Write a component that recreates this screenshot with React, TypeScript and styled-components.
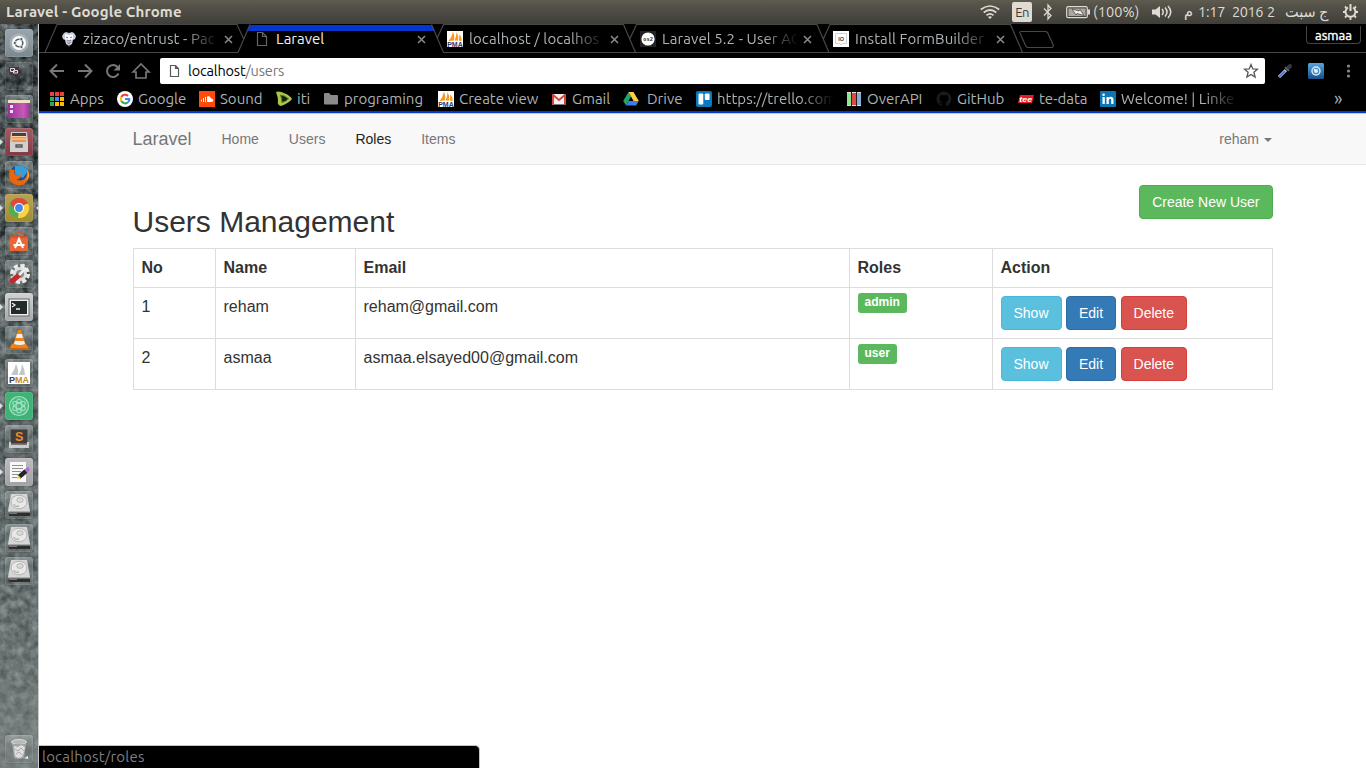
import React from 'react';
import styled, { createGlobalStyle } from 'styled-components';

const ui = '"Ubuntu", "Noto Sans", "DejaVu Sans", sans-serif';

const Global = createGlobalStyle`
  * { box-sizing: border-box; }
  body { margin: 0; background: #fff; overflow: hidden; font-family: "Liberation Sans", Arial, sans-serif; }
  svg { display: block; flex: none; }
`;

const Desktop = styled.div`
  display: flex; flex-direction: column; width: 1366px; height: 768px; position: relative;
`;
const Panel = styled.header`
  height: 24px; flex: none; display: flex; justify-content: space-between; align-items: center;
  padding: 0 7px 0 6px; background: linear-gradient(#5f5b4f 0, #55534a 20%, #3f3e39 100%);
  color: #dfdbd2; font: 14.5px ${ui};
`;
const WindowTitle = styled.div`font-weight: 700; font-size: 15px; letter-spacing: 0.13px; line-height: 24px; white-space: nowrap;`;
const Indicators = styled.div`display: flex; align-items: center; height: 24px;`;
const Slot = styled.div<{ $w: number; $ls?: number }>`
  width: ${p => p.$w}px; flex: none; white-space: nowrap; letter-spacing: ${p => p.$ls ?? 0}px; line-height: 24px;
`;
const Language = styled.div`
  width: 20px; height: 20px; margin-right: 11px; background: #dfdbd2; color: #3c3b37; border-radius: 2px;
  font-size: 13px; line-height: 20px; text-align: center; letter-spacing: -0.5px;
`;
const Body = styled.div`display: flex; flex: 1; min-height: 0;`;
const Launcher = styled.aside`
  width: 39px; flex: none; position: relative; display: flex; flex-direction: column; justify-content: space-between;
  padding: 5px 0 5px 5px; background: #59625f; border-right: 1px solid #c9cccb; overflow: hidden;
`;
const Stone = styled.svg`position: absolute; inset: 0;`;
const TileList = styled.div`display: flex; flex-direction: column; gap: 5px; position: relative;`;
const Tile = styled.div<{ $bg?: string }>`
  width: 28px; height: 28px; border-radius: 3px; position: relative;
  background: ${p => p.$bg ?? 'linear-gradient(rgba(190,200,200,.4), rgba(110,120,120,.25) 50%, rgba(110,120,120,.25))'};
  box-shadow: inset 0 0 0 1px rgba(255,255,255,.1), 0 0 2px rgba(0,0,0,.35);
`;
const Pip = styled.i<{ $right?: boolean }>`
  position: absolute; top: 11px; ${p => (p.$right ? 'right: -6px; border-right: 3px solid #ddd;' : 'left: -5px; border-left: 3px solid #ddd;')}
  border-top: 3px solid transparent; border-bottom: 3px solid transparent;
`;
const Browser = styled.main`flex: 1; min-width: 0; display: flex; flex-direction: column;`;
const TabStrip = styled.div`
  height: 30px; flex: none; background: #000; position: relative; display: flex; padding-left: 22px; font: 15px ${ui};
`;
const Outlines = styled.svg`position: absolute; left: 0; top: 0;`;
const Tab = styled.div<{ $active?: boolean }>`
  width: 193px; height: 30px; display: flex; align-items: center; position: relative; color: ${p => (p.$active ? '#f1f1f1' : '#adb2b6')};
`;
const Caption = styled.div<{ $fade?: boolean }>`
  width: 136px; margin-left: 6px; overflow: hidden; white-space: nowrap; line-height: 30px;
  ${p => p.$fade && 'letter-spacing: .08px; mask-image: linear-gradient(90deg, #000 102px, transparent 136px);'}
`;
const Profile = styled.div`
  position: absolute; right: 5px; top: 2px; width: 55px; height: 18px; border: 1px solid #444; border-top: 0; border-radius: 0 0 4px 4px;
  color: #fff; font-size: 13px; line-height: 19px; text-align: center; -webkit-text-stroke: .4px #fff;
`;
const Toolbar = styled.div`height: 34px; flex: none; background: #000; display: flex; padding: 4px 7px 4px 8px; align-items: center;`;
const NavIcons = styled.div`display: flex; width: 113px; gap: 8px;`;
const Omnibox = styled.div`
  width: 1105px; height: 26px; background: #fff; border-radius: 2px; display: flex; align-items: center; padding: 0 6px 0 7px;
  font: 14.5px ${ui}; color: #000;
`;
const Address = styled.div`flex: 1; padding-left: 7px; letter-spacing: -0.17px; line-height: 26px; span { color: #767676; }`;
const Extensions = styled.div`display: flex; flex: 1; align-items: center; padding-left: 12px; gap: 15px;`;
const Bookmarks = styled.div`
  height: 25px; flex: none; background: #000; border-bottom: 2px solid #0736cf; padding: 0 0 2px 11px; display: flex; color: #adb2b6;
  font: 15px ${ui};
`;
const Bookmark = styled.div<{ $w: number; $gap?: number; $fade?: boolean }>`
  width: ${p => p.$w}px; flex: none; display: flex; align-items: center; gap: ${p => p.$gap ?? 5}px; white-space: nowrap;
  line-height: 21px;
  span { overflow: hidden; ${p => p.$fade && 'width: 117px; mask-image: linear-gradient(90deg, #000 84px, transparent 117px);'} }
`;
const More = styled.div`font-size: 18px; margin-left: 98px; line-height: 20px;`;

const Page = styled.div`flex: 1; background: #fff; color: #333; font-size: 16px; line-height: 1.42857;`;
const Navbar = styled.nav`height: 52px; background: #f8f8f8; border-bottom: 1px solid #e7e7e7; border-top: 1px solid #c5c9d8;`;
const Container = styled.div`width: 1140px; margin: 0 auto; display: flex; flex-direction: column;`;
const NavRow = styled(Container)`flex-direction: row; height: 50px; align-items: center; font-size: 14px; color: #777;`;
const Brand = styled.a`font-size: 18px; width: 74px; line-height: 20px;`;
const NavLink = styled.a<{ $active?: boolean }>`padding: 0 15px; line-height: 20px; ${p => p.$active && 'color: #222;'}`;
const UserMenu = styled.a`
  margin-left: auto; display: flex; align-items: center; gap: 5px; line-height: 20px; padding-right: .5px;
  &::after { content: ''; margin-top: 1px; border-top: 4px solid #777; border-left: 4px solid transparent; border-right: 4px solid transparent; }
`;
const Heading = styled.div`display: flex; justify-content: space-between; align-items: flex-start; padding-top: 20px; height: 83px;`;
const Title = styled.h2`font-size: 30px; line-height: 33px; margin: 20px 0 10px; font-weight: 400;`;
const tones = {
  success: ['#5cb85c', '#4cae4c'], info: ['#5bc0de', '#46b8da'], primary: ['#337ab7', '#2e6da4'], danger: ['#d9534f', '#d43f3a'],
};
const Button = styled.button<{ $tone: keyof typeof tones }>`
  height: 34px; padding: 6px 12px; font: 14px/20px "Liberation Sans", Arial, sans-serif; color: #fff; border-radius: 4px;
  background: ${p => tones[p.$tone][0]}; border: 1px solid ${p => tones[p.$tone][1]};
`;
const Table = styled.table`
  width: 1140px; border-collapse: collapse; table-layout: fixed;
  th, td { border: 1px solid #ddd; padding: 8px; text-align: left; vertical-align: top; }
  th { height: 39px; padding-bottom: 7px; } td { height: 51px; }
`;
const Actions = styled.div`display: flex; gap: 4.44px; height: 34px;`;
const Badge = styled.span`
  display: block; width: max-content; height: 20px; margin-top: -3px; padding: 3px 7px 5px; border-radius: 3px; background: #5cb85c; color: #fff; font: bold 12px/12px "Liberation Sans", Arial, sans-serif;
`;
const StatusBubble = styled.div`
  position: absolute; left: 39px; bottom: 0; width: 441px; height: 23px; background: #000; color: #7f7f7f; border: 1px solid #c4c4c4;
  border-left: 0; border-bottom: 0; border-radius: 0 5px 0 0; padding-left: 3px; font: 15px/22px ${ui}; letter-spacing: .2px;
`;

const Doc = ({ c = '#5a5a5a' }) => (
  <svg width="16" height="16" viewBox="0 0 16 16" fill="none" stroke={c} strokeWidth="1.2"><path d="M3.5 1.5h5l4 4v9h-9zM8.5 1.5v4h4" /></svg>
);
const Close = () => <svg width="9" height="9" viewBox="0 0 9 9" stroke="#8a8a8a" strokeWidth="1.5"><path d="M1 1l7 7M8 1L1 8" /></svg>;
const Pma = () => (
  <svg width="16" height="16" viewBox="0 0 16 16"><path fill="#fff" d="M0 0h16v16H0z" />
    <path fill="#f7981d" d="M1.500 10Q5 6 6 .5Q8 5 7.200 9.500zM7.700 9.500Q9.500 5 9.500 1Q12 5 11.300 9.500zM12 9.500l.3-6Q15 6 14.500 10z" />
    <text x=".2" y="16" fontFamily="Liberation Sans" fontWeight="bold" fontSize="7" textLength="15.600" lengthAdjust="spacingAndGlyphs" fill="#36386b">PMA</text></svg>
);
const Lion = () => (
  <svg width="16" height="16" viewBox="0 0 16 16"><path fill="#c7cbdc" d="M3 2l2-1 3 1 3-1 2 1 2 3-1 3-2 1-1 4-3 2-3-2-1-4-2-1-1-3z" /><path fill="#fff" d="M4 3l4 1 4-1v5l-4 2-4-2z" /><path stroke="#565c78" strokeWidth=".8" fill="none" d="M5 6l2 .8M11 6l-2 .8M6 9l2 1 2-1M6.500 11.500l1.500 1 1.500-1" /><path fill="#a4552c" d="M6.500 14h3L8 16z" /></svg>
);
const Os2 = () => (
  <svg width="16" height="16" viewBox="0 0 16 16"><path fill="#222" d="M0 0h16v16H0z" /><circle cx="8" cy="8" r="6.6" fill="#fff" /><text x="3.2" y="9.8" fontFamily="Liberation Sans" fontWeight="bold" fontSize="5" textLength="9.6" fill="#222">os2</text></svg>
);
const Io = () => (
  <svg width="16" height="16" viewBox="0 0 16 16"><path fill="#fff" d="M0 0h16v16H0z" /><path fill="none" stroke="#d0d0d0" d="M2.5 2.5h11v10h-4L8 14l-1.500-1.500h-4z" /><text x="5.300" y="9.500" fontFamily="Liberation Sans" fontWeight="bold" fontSize="5.500" fill="#444">IO</text></svg>
);
const GridApps = () => (
  <svg width="14" height="14" viewBox="0 0 14 14">
    {['#ea4335', '#ea4335', '#ea4335', '#34a853', '#4285f4', '#fbbc05', '#34a853', '#fbbc05', '#fbbc05'].map((c, i) => (
      <rect key={i} x={(i % 3) * 5} y={Math.floor(i / 3) * 5} width="4" height="4" fill={c} />
    ))}
  </svg>
);
const Google = () => (
  <svg width="16" height="16" viewBox="0 0 16 16"><circle cx="8" cy="8" r="8" fill="#fff" /><g fill="none" strokeWidth="2.100">
    <path stroke="#ea4335" d="M4.300 5.900A4.300 4.300 0 0 1 11 4.900" /><path stroke="#fbbc05" d="M4.300 5.900a4.300 4.300 0 0 0 0 4.200" /><path stroke="#34a853" d="M4.300 10.100A4.300 4.300 0 0 0 11 11.200" /><path stroke="#4285f4" d="M11 11.200Q12.500 10 12.300 8H8" /></g></svg>
);
const SoundCloud = () => (
  <svg width="16" height="16" viewBox="0 0 16 16"><path fill="#ff4a0c" d="M0 0h16v16H0z" /><path stroke="#fff" d="M2.500 8.500v2M4.500 7v4M6.500 6v5" /><path fill="#fff" d="M8 5.500Q11 4.200 12 7.500q2.200 0 2.200 1.800T12.400 11H8z" /></svg>
);
const Iti = () => (
  <svg width="16" height="16" viewBox="0 0 16 16"><path d="M0 1Q3-.5 9 2.500Q14 4.500 16 8Q13 12 5 15Q1 14 2 10Q2 6 0 1z" fill="#a9c64b" /><path d="M4.500 4Q9 4.500 12.500 7.800Q10 10.500 6 11.500Q6 8 4.500 4z" fill="#152109" stroke="#587d23" /></svg>
);
const Folder = () => <svg width="16" height="16" viewBox="0 0 16 16"><path fill="#8b8b8b" d="M1 3q0-1 1-1h4l2 2h6q1 0 1 1v7.500q0 1-1 1H2q-1 0-1-1z" /></svg>;
const Gmail = () => (
  <svg width="16" height="16" viewBox="0 0 16 16"><path fill="#f1f1f1" d="M1 3h14v10.500H1z" /><path fill="#d44638" d="M1 3h2v10.500H1zM13 3h2v10.500h-2z" /><path fill="none" stroke="#d44638" strokeWidth="1.800" d="M1.500 3.500L8 9l6.500-5.500" /></svg>
);
const Drive = () => (
  <svg width="16" height="16" viewBox="0 0 16 16"><path fill="#23a566" d="M5.500 1L8 5.500 3 14.500.2 10z" /><path fill="#ffcf43" d="M5.500 1h5l5.300 9h-5.200z" /><path fill="#3b7ded" d="M5.500 10h10.300L13 14.500H3z" /></svg>
);
const Trello = () => (
  <svg width="16" height="16" viewBox="0 0 16 16"><rect width="16" height="16" rx="2" fill="#0b79bf" /><rect x="2.500" y="2.500" width="4.800" height="11" rx="1" fill="#fff" /><rect x="8.800" y="2.500" width="4.800" height="6.500" rx="1" fill="#fff" /></svg>
);
const OverApi = () => (
  <svg width="16" height="16" viewBox="0 0 16 16"><path fill="#ddd" d="M1 1h14v14H1z" /><path fill="#8fe68f" d="M1 2h4v12H1z" /><path fill="#e84444" d="M6 2h4v12H6z" /><path fill="#88aed4" d="M11 2h4v12h-4z" /><path stroke="#222" d="M5.500 1v14M10.500 1v14" /></svg>
);
const Github = () => (
  <svg width="16" height="16" viewBox="0 0 16 16"><path fill="#191c1f" d="M8 .5a7.500 7.500 0 0 0-2.400 14.600v-2.400Q3.500 13 3 11.200h1.200l1.600 1 .6-1Q3.200 10.500 3.500 6.500l.8-1.200V3.400l2 .8h3.400l2-.8v1.900l.8 1.200q.3 4-2.900 4.700.7.500.7 1.600v2.300A7.500 7.500 0 0 0 8 .5z" /></svg>
);
const TeData = () => (
  <svg width="16" height="16" viewBox="0 0 16 16"><path fill="#e31d25" d="M2 4h14l-2 8H0z" /><text x="1.300" y="10.700" fontFamily="Liberation Sans" fontWeight="bold" fontStyle="italic" fontSize="8" textLength="12.800" lengthAdjust="spacingAndGlyphs" fill="#fff">tee</text></svg>
);
const LinkedIn = () => (
  <svg width="16" height="16" viewBox="0 0 16 16"><rect width="16" height="16" rx="1" fill="#0b76b6" /><path fill="#fff" d="M2.500 6h2.300v7H2.500zM6.500 6h2.200v1Q10 5.300 12 6.100q1.500.7 1.500 2.700V13h-2.300V9.200q0-1.400-1.100-1.400T8.800 9.200V13H6.500z" /><circle cx="3.600" cy="3.700" r="1.300" fill="#fff" /></svg>
);

const Art = ({ children }: { children: React.ReactNode }) => <svg width="28" height="28" viewBox="0 0 28 28">{children}</svg>;
const Disk = () => (
  <Art><path fill="#d6d7d5" d="M6 3h16l3 17H3z" /><path fill="#2c2d2d" d="M3 20h22v5H4z" /><path fill="#a9a9a7" d="M3 20h22v1.500H3z" /><path fill="#777" d="M4 21.500h8V23H4z" /><ellipse cx="14" cy="11" rx="8" ry="6.800" fill="#e8e8e6" stroke="#b4b4b4" /><ellipse cx="15" cy="9" rx="3.200" ry="2.300" fill="#dcdcda" stroke="#aaa" strokeWidth=".8" /><path stroke="#999" fill="none" d="M9 13q0 3 5 2" /></Art>
);
const Chrome = () => (
  <Art><circle cx="14" cy="14" r="10" fill="#4caf50" /><path fill="#e04a3c" d="M14 14L5.300 9A10 10 0 0 1 22.700 9z" /><path fill="#fdd23c" d="M14 14l8.700-5A10 10 0 0 1 13 24z" /><path fill="#e04a3c" d="M5.300 9h17.400v1H14L9.700 16z" /><circle cx="14" cy="14" r="5" fill="#fff" /><circle cx="14" cy="14" r="3.900" fill="#438bea" /></Art>
);

const tiles: { bg?: string; left?: boolean; right?: boolean; art: React.ReactNode }[] = [
  { bg: 'linear-gradient(#9aa6ad, #7b898d)', art: <Art><circle cx="14" cy="14" r="9.500" fill="#b5bdc0" opacity=".7" /><circle cx="14" cy="14" r="7" fill="#fff" /><circle cx="14" cy="14" r="3.800" fill="none" stroke="#565d60" strokeWidth="1.600" /><g fill="#565d60" stroke="#fff" strokeWidth=".7"><circle cx="9.800" cy="14" r="1.600" /><circle cx="16.400" cy="10" r="1.600" /><circle cx="16.400" cy="18" r="1.600" /></g></Art> },
  { bg: 'linear-gradient(rgba(140,145,145,.3), rgba(30,35,35,.35) 50%, transparent)', art: <Art><rect x="4" y="5" width="10" height="8" fill="#493544" /><path fill="none" stroke="#e2dfe0" d="M5.500 6.500h4v3h-4zM8.500 8.500h4v2.500h-4z" /></Art> },
  { art: <Art><defs><linearGradient id="desk"><stop stopColor="#9a2fa0" /><stop offset=".7" stopColor="#c959b5" /><stop offset="1" stopColor="#95389a" /></linearGradient></defs><rect x="3" y="5" width="22" height="18" fill="url(#desk)" /><path fill="#ece4c5" d="M3 5h22v3H3z" /><path fill="#f5dff2" d="M5 10h3v3H5zM5 15h3v3H5z" /></Art> },
  { bg: 'linear-gradient(#a45c62, #823842)', left: true, art: <Art><path fill="#ccc" d="M6 4h16l1 10H5z" /><path fill="#4b3f3b" d="M7 5h14v9H7z" /><path fill="#ee944e" d="M7 8h14v6H7z" /><path stroke="#ffd2a2" d="M7 8.500h14M7 11h14" /><path fill="#d0d0ce" d="M5 14h18v10H5z" /><path fill="none" stroke="#555" strokeWidth="1.300" d="M11 17v2h6v-2z" /></Art> },
  { art: <Art><circle cx="14" cy="14" r="10" fill="#1a4f9c" /><path fill="#35a0d8" d="M10 5q9-3 13 5l-5 7-8-4z" /><path fill="#e8670e" d="M5 8q2 1 5 1-2 3 1 5 3 1 5-1 0 6-5 5 6 4 10-2 2-4 1-8 4 5 1 11-4 6-10 5.500Q1 22 5 8z" /><path fill="#ffc730" d="M22 8q4 7-1 12 3-5 1-12z" /></Art> },
  { bg: 'linear-gradient(#b7a353, #a18b35)', left: true, right: true, art: <Chrome /> },
  { art: <Art><path fill="none" stroke="#bb603d" strokeWidth="2" d="M10 10V7q4-4 8 0v3" /><path fill="#ea6635" d="M5 9h18v15H5z" /><path fill="#c45b36" d="M5 9h18v2H5z" /><path fill="none" stroke="#fff" strokeWidth="2" d="M10 21l4-9 4 9M8.500 18h11" /></Art> },
  { art: <Art><circle cx="15" cy="14" r="7.500" fill="none" stroke="#ececea" strokeWidth="5" strokeDasharray="3.700 2.190" /><circle cx="15" cy="14" r="7" fill="#ddd" /><circle cx="15" cy="14" r="4" fill="#85908e" /><path stroke="#c3292a" strokeWidth="5" strokeLinecap="round" d="M7 21l6-5" /><path stroke="#eee" strokeWidth="2.500" d="M14 15l7-7" /><path fill="none" stroke="#eee" strokeWidth="2" d="M19 4q-3 5 4 5" /></Art> },
  { bg: 'linear-gradient(#d2d2d4, #a8a8aa)', left: true, art: <Art><rect x="4" y="6" width="20" height="17" fill="#eee" stroke="#60686b" /><rect x="6" y="8" width="16" height="13" fill="#24292a" /><path fill="none" stroke="#eee" strokeWidth="1.300" d="M7 10l3 2-3 2M11 16h4" /></Art> },
  { art: <Art><path fill="#ed831d" d="M7 18h14l3 5H4z" /><path fill="#ed831d" d="M13 4h3l5 15q-7 3-13 0z" /><path fill="#eee" d="M12 8h5l1 4h-7zM10 15h9l1 3q-5 2-11 0z" /><path fill="#c7660f" d="M4 22h20v2H4z" /></Art> },
  { art: <Art><path fill="#fff" d="M3 3h22v22H3z" /><path fill="#c4c5c8" d="M6 16Q10 10 11 5q3 6 2 11zM14 16q3-6 3-11 3 5 3 11z" /><text x="4" y="24" fontFamily="Liberation Sans" fontWeight="bold" fontSize="9" textLength="20" lengthAdjust="spacingAndGlyphs" fill="#333d63">P<tspan fill="#c78930">MA</tspan></text></Art> },
  { bg: '#3fb276', left: true, art: <Art><circle cx="14" cy="14" r="9.500" fill="#48bd83" stroke="#a7e1c2" strokeWidth="1.200" /><g fill="none" stroke="#a7e1c2" strokeWidth="1.100"><ellipse cx="14" cy="14" rx="7" ry="2.800" transform="rotate(30 14 14)" /><ellipse cx="14" cy="14" rx="7" ry="2.800" transform="rotate(90 14 14)" /><ellipse cx="14" cy="14" rx="7" ry="2.800" transform="rotate(150 14 14)" /></g></Art> },
  { art: <Art><path fill="#3d3d3e" stroke="#888" d="M5 4h18v15H5z" /><path fill="#ccc" d="M4 17h2v3h16v-3h2v6H4z" /><text x="10" y="15.500" fontFamily="Liberation Sans" fontWeight="bold" fontSize="12.500" fill="#f38b29">S</text></Art> },
  { bg: 'linear-gradient(#bdbdbf, #a2a2a4)', left: true, art: <Art><path fill="#f8f8f8" d="M5 4h16v20H5z" /><path stroke="#909090" d="M7 7.500h11M7 10.500h11M7 13.500h9M7 16.500h6M7 19.500h5" /><path stroke="#252525" strokeWidth="4.500" d="M14 19l7-6" /><path fill="#b46bd0" d="M20 11l3-2 2 3-3 3z" /><path fill="#f3cf44" d="M12 21l1-4 3 3z" /></Art> },
  { art: <Disk /> }, { art: <Disk /> }, { art: <Disk /> },
];

const tabs = [
  { icon: <Lion />, title: 'zizaco/entrust - Pac' },
  { icon: <Doc c="#666" />, title: 'Laravel', active: true },
  { icon: <Pma />, title: 'localhost / localhos' },
  { icon: <Os2 />, title: 'Laravel 5.2 - User AC' },
  { icon: <Io />, title: 'Install FormBuilder' },
];
const bookmarks = [
  { icon: <GridApps />, text: 'Apps', w: 67, gap: 6 },
  { icon: <Google />, text: 'Google', w: 82 },
  { icon: <SoundCloud />, text: 'Sound', w: 77 },
  { icon: <Iti />, text: 'iti', w: 47 },
  { icon: <Folder />, text: 'programing', w: 115 },
  { icon: <Pma />, text: 'Create view', w: 113 },
  { icon: <Gmail />, text: 'Gmail', w: 72 },
  { icon: <Drive />, text: 'Drive', w: 73, gap: 8 },
  { icon: <Trello />, text: 'https://trello.com', w: 150, fade: true },
  { icon: <OverApi />, text: 'OverAPI', w: 90 },
  { icon: <Github />, text: 'GitHub', w: 82 },
  { icon: <TeData />, text: 'te-data', w: 82 },
  { icon: <LinkedIn />, text: 'Welcome! | Linke', w: 136, fade: true },
];
const users = [
  { no: 1, name: 'reham', email: 'reham@gmail.com', role: 'admin' },
  { no: 2, name: 'asmaa', email: 'asmaa.elsayed00@gmail.com', role: 'user' },
];

const SystemPanel = () => (
  <Panel>
    <WindowTitle>Laravel - Google Chrome</WindowTitle>
    <Indicators>
      <Slot $w={32}><svg width="20" height="24" viewBox="0 0 20 24" fill="none" stroke="#dfdbd2" strokeWidth="1.700"><path d="M.8 9.500Q10 2.500 19.200 9.500M3.700 12.500Q10 7.500 16.300 12.500M6.500 15.300Q10 12.500 13.500 15.300" /><path fill="#dfdbd2" stroke="none" d="M8 17q2-1.500 4 0l-2 2z" /></svg></Slot>
      <Language>En</Language>
      <Slot $w={23}><svg width="10" height="24" viewBox="0 0 10 24" fill="none" stroke="#dfdbd2" strokeWidth="1.300"><path d="M1 8.500l7 7L5 19V5l3 3.500-7 7" /></svg></Slot>
      <Slot $w={27}><svg width="25" height="24" viewBox="0 0 25 24"><rect x=".7" y="6.700" width="20.600" height="11" rx="1.500" fill="none" stroke="#dfdbd2" strokeWidth="1.200" /><path fill="#aaa79f" d="M2.500 8.500h17v7.500h-17z" /><path fill="#dfdbd2" d="M22 9.500h2v5h-2z" /><path fill="#eee" stroke="#3c3b37" strokeWidth=".7" d="M6 9l7 2 1-1.500 4 6-7-2-1 1.500z" /></svg></Slot>
      <Slot $w={59} $ls={0.1}>(100%)</Slot>
      <Slot $w={32}><svg width="21" height="24" viewBox="0 0 21 24" fill="none" stroke="#dfdbd2" strokeWidth="1.500"><path fill="#dfdbd2" stroke="none" d="M0 9.500h3.500L8 6v12l-4.500-3.500H0z" /><path d="M10 9q2.500 3 0 6M13 7.500q4 4.500 0 9M16 6q5.500 6 0 12" /></svg></Slot>
      <Slot $w={14}>م</Slot>
      <Slot $w={34} $ls={-0.2}>1:17</Slot>
      <Slot $w={35} $ls={-0.4}>2016</Slot>
      <Slot $w={18}>2</Slot>
      <Slot $w={57} dir="rtl" style={{ textAlign: 'left' }}>ج سبت</Slot>
      <svg width="17" height="24" viewBox="0 0 17 24" fill="none" stroke="#dfdbd2" strokeWidth="2"><path d="M6 7.500a5 5 0 1 0 5 0M8.500 4v7" /><path strokeWidth="1.800" d="M1 12h2M14 12h2M3 6.500l1.500 1.500M14 6.500L12.500 8M3 17.500L4.500 16M14 17.500L12.500 16M8.500 17v3" /></svg>
    </Indicators>
  </Panel>
);

export default function App() {
  return (
    <Desktop>
      <Global />
      <SystemPanel />
      <Body>
        <Launcher>
          <Stone width="39" height="744">
            <filter id="stone" x="0" y="0" width="1" height="1" colorInterpolationFilters="sRGB"><feTurbulence type="fractalNoise" baseFrequency=".13" numOctaves="4" seed="8" /><feColorMatrix values="1.100 0 0 0 -.2  1.100 0 0 0 -.17  1.100 0 0 0 -.17  0 0 0 0 1" /></filter>
            <linearGradient id="wash" x2="0" y2="1"><stop stopColor="#363e40" stopOpacity=".4" /><stop offset=".25" stopColor="#485255" stopOpacity=".4" /><stop offset=".5" stopColor="#687173" stopOpacity=".6" /><stop offset=".8" stopColor="#717a7a" stopOpacity=".65" /><stop offset="1" stopColor="#7f8786" stopOpacity=".85" /></linearGradient>
            <rect width="39" height="744" filter="url(#stone)" /><rect width="39" height="744" fill="url(#wash)" />
          </Stone>
          <TileList>
            {tiles.map((t, i) => <Tile key={i} $bg={t.bg}>{t.art}{t.left && <Pip />}{t.right && <Pip $right />}</Tile>)}
          </TileList>
          <Tile><Art><ellipse cx="14" cy="7" rx="7.500" ry="2.500" fill="#b7bab8" stroke="#ddd" /><path fill="#a1a5a4" d="M7 9h14l-2 14q-5 2-10 0z" /><path fill="#dededc" d="M9 11l4 1 3-2 4 2-1 5-2 5-4 1-3-2z" /><path stroke="#aaa" fill="none" d="M10 14l3 2 3-3 3 3M11 19l3-2 3 3" /><path fill="#eee" d="M19 23l4-2v3z" /></Art></Tile>
        </Launcher>
        <Browser>
          <TabStrip>
            <Outlines width="1327" height="30" viewBox="39 24 1327 30" fill="none" stroke="#474747" strokeWidth="1.200">
              <path fill="#0736cf" stroke="none" d="M250 25h182l3 6H247.500z" />
              <path d="M39 52.500h6L57 24.500h180l6.500 14M238 52.500H45M238 52.500l12-28M431.500 24.500l12 28H1366M437 38.500l6.500-14H623.500l12 28M630 38.500l6.500-14H817l12 28M823.500 38.500l6.500-14h180.500l12 28" />
              <path d="M1020 33q-.5-1.500 1-1.500h25l1.500 1 6 13-1 2h-25l-1.500-1z" />
            </Outlines>
            {tabs.map(t => (
              <Tab key={t.title} $active={t.active}>{t.icon}<Caption $fade={!t.active}>{t.title}</Caption><Slot $w={5} /><Close /></Tab>
            ))}
            <Profile>asmaa</Profile>
          </TabStrip>
          <Toolbar>
            <NavIcons>
              <svg width="20" height="20" viewBox="0 0 20 20" fill="none" stroke="#777" strokeWidth="2"><path d="M17 10H4M10 3.500L3.500 10l6.500 6.500" /></svg>
              <svg width="20" height="20" viewBox="0 0 20 20" fill="none" stroke="#777" strokeWidth="2"><path d="M3 10h13M10 3.500l6.500 6.500-6.500 6.500" /></svg>
              <svg width="20" height="20" viewBox="0 0 20 20" fill="none" stroke="#777" strokeWidth="2"><path d="M15.500 12.500A6 6 0 1 1 14.500 6" /><path fill="#777" stroke="none" d="M17 3v6.500h-6.500z" /></svg>
              <svg width="20" height="20" viewBox="0 0 20 20" fill="none" stroke="#777" strokeWidth="1.700"><path d="M2 11l8-8 8 8h-3v6H5v-6z" /></svg>
            </NavIcons>
            <Omnibox>
              <svg width="14" height="16" viewBox="0 0 14 16" fill="none" stroke="#5a5a5a" strokeWidth="1.200"><path d="M3.500 2.500h5l3 3v8h-8zM8.500 2.500v3h3" /></svg>
              <Address>localhost<span>/users</span></Address>
              <svg width="16" height="16" viewBox="0 0 16 16" fill="none" stroke="#555" strokeWidth="1.300"><path d="M8 1.500l1.800 4.400 4.700.3-3.600 3 1.200 4.800L8 11.400 3.900 14l1.200-4.800-3.600-3 4.700-.3z" /></svg>
            </Omnibox>
            <Extensions>
              <svg width="16" height="16" viewBox="0 0 16 16"><path stroke="#d8e2f4" strokeWidth="3" d="M2 14l7-7" /><path stroke="#4064d8" strokeWidth="1.700" d="M2 14l6-6" /><path stroke="#333943" strokeWidth="4" strokeLinecap="round" d="M10 6l3-3" /><path stroke="#626873" strokeWidth="1.500" d="M8 4l4 4" /></svg>
              <svg width="16" height="16" viewBox="0 0 16 16"><defs><linearGradient id="ext" x2="0" y2="1"><stop stopColor="#5aa5dc" /><stop offset="1" stopColor="#14518c" /></linearGradient></defs><rect width="16" height="16" rx="1.500" fill="url(#ext)" /><circle cx="8" cy="8" r="4.700" fill="#d9edfb" /><circle cx="8" cy="8" r="2.700" fill="none" stroke="#488fc9" strokeWidth="1.300" /><path stroke="#fff" d="M6 6l2 2" /></svg>
              <svg width="18" height="16" viewBox="0 0 18 16" fill="#8a8a8a"><circle cx="9.500" cy="3" r="1.600" /><circle cx="9.500" cy="8" r="1.600" /><circle cx="9.500" cy="13" r="1.600" /></svg>
            </Extensions>
          </Toolbar>
          <Bookmarks>
            {bookmarks.map(b => <Bookmark key={b.text} $w={b.w} $gap={b.gap} $fade={b.fade}>{b.icon}<span>{b.text}</span></Bookmark>)}
            <More>»</More>
          </Bookmarks>
          <Page>
            <Navbar>
              <NavRow>
                <Brand>Laravel</Brand>
                <NavLink>Home</NavLink><NavLink>Users</NavLink><NavLink $active>Roles</NavLink><NavLink>Items</NavLink>
                <UserMenu>reham</UserMenu>
              </NavRow>
            </Navbar>
            <Container>
              <Heading><Title>Users Management</Title><Button $tone="success">Create New User</Button></Heading>
              <Table>
                <colgroup><col style={{ width: 82 }} /><col style={{ width: 140 }} /><col style={{ width: 494 }} /><col style={{ width: 143 }} /><col /></colgroup>
                <thead><tr><th>No</th><th>Name</th><th>Email</th><th>Roles</th><th>Action</th></tr></thead>
                <tbody>
                  {users.map(u => (
                    <tr key={u.no}>
                      <td>{u.no}</td><td>{u.name}</td><td>{u.email}</td><td><Badge>{u.role}</Badge></td>
                      <td><Actions><Button $tone="info">Show</Button><Button $tone="primary">Edit</Button><Button $tone="danger">Delete</Button></Actions></td>
                    </tr>
                  ))}
                </tbody>
              </Table>
            </Container>
          </Page>
        </Browser>
      </Body>
      <StatusBubble>localhost/roles</StatusBubble>
    </Desktop>
  );
}
